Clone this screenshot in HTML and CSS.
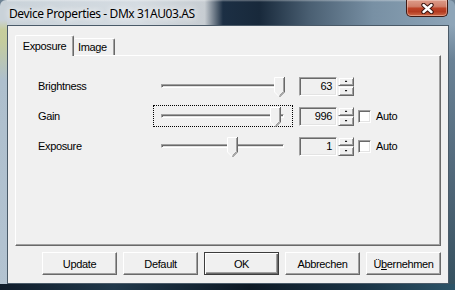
FILE: index.html
```html
<!DOCTYPE html>
<html>
<head>
  <title>Device Properties</title>
  <link rel="stylesheet" href="styles.css">
</head>
<body>
  <div class="window">
    <div class="titlebar">
      <span class="title">Device Properties - DMx 31AU03.AS</span>
      <div class="close">
        <svg width="13" height="11" viewBox="0 0 13 11">
          <path d="M2.5 2 L10.5 9 M10.5 2 L2.5 9" stroke="#3a1510" stroke-width="4.4" stroke-linecap="round"/>
          <path d="M2.5 2 L10.5 9 M10.5 2 L2.5 9" stroke="#fff" stroke-width="2.4" stroke-linecap="round"/>
        </svg>
      </div>
    </div>

    <div class="client">
      <div class="tabs">
        <div class="tab active">Exposure</div>
        <div class="tab">Image</div>
      </div>

      <div class="panel">
        <div class="row">
          <span class="name">Brightness</span>
          <div class="slider">
            <div class="track"></div>
            <svg class="thumb" style="left: 120px" width="11" height="21" viewBox="0 0 11 21">
              <path d="M0.5 15 V0.5 H10.5 V15 L5.5 20 Z" fill="#f0f0f0"/>
              <path d="M5 19.5 L0.5 15 V0.5 H10" fill="none" stroke="#fff"/>
              <path d="M10.5 0 V15 L5.5 20" fill="none" stroke="#696969"/>
              <path d="M9.5 1 V14.5 L5.5 18.5" fill="none" stroke="#a0a0a0"/>
            </svg>
          </div>
          <div class="edit">63</div>
          <div class="spin"><span class="up"></span><span class="down"></span></div>
        </div>

        <div class="row">
          <span class="name">Gain</span>
          <div class="slider focus">
            <div class="track"></div>
            <svg class="thumb" style="left: 116px" width="11" height="21" viewBox="0 0 11 21">
              <path d="M0.5 15 V0.5 H10.5 V15 L5.5 20 Z" fill="#f0f0f0"/>
              <path d="M5 19.5 L0.5 15 V0.5 H10" fill="none" stroke="#fff"/>
              <path d="M10.5 0 V15 L5.5 20" fill="none" stroke="#696969"/>
              <path d="M9.5 1 V14.5 L5.5 18.5" fill="none" stroke="#a0a0a0"/>
            </svg>
          </div>
          <div class="edit">996</div>
          <div class="spin"><span class="up"></span><span class="down"></span></div>
          <span class="check"></span>
          <span class="auto">Auto</span>
        </div>

        <div class="row">
          <span class="name">Exposure</span>
          <div class="slider">
            <div class="track"></div>
            <svg class="thumb" style="left: 73px" width="11" height="21" viewBox="0 0 11 21">
              <path d="M0.5 15 V0.5 H10.5 V15 L5.5 20 Z" fill="#f0f0f0"/>
              <path d="M5 19.5 L0.5 15 V0.5 H10" fill="none" stroke="#fff"/>
              <path d="M10.5 0 V15 L5.5 20" fill="none" stroke="#696969"/>
              <path d="M9.5 1 V14.5 L5.5 18.5" fill="none" stroke="#a0a0a0"/>
            </svg>
          </div>
          <div class="edit">1</div>
          <div class="spin"><span class="up"></span><span class="down"></span></div>
          <span class="check"></span>
          <span class="auto">Auto</span>
        </div>
      </div>

      <div class="buttons">
        <button class="btn">Update</button>
        <button class="btn">Default</button>
        <button class="btn default">OK</button>
        <button class="btn">Abbrechen</button>
        <button class="btn">Ü<u>b</u>ernehmen</button>
      </div>
    </div>
  </div>
</body>
</html>
```

FILE: styles.css
```css
* {
  box-sizing: border-box;
}

body {
  margin: 0;
  background: #6d8294;
  font-family: "Liberation Sans", Arial, sans-serif;
  font-size: 11px;
  letter-spacing: -0.35px;
  color: #000;
}

/* glass frame */
.window {
  width: 455px;
  height: 290px;
  padding: 0 6px 6px 7px;
  border-radius: 6px 6px 0 0;
  display: flex;
  flex-direction: column;
  background:
    linear-gradient(to right, #0f1c2a, #20384a 25%, #0c1824 55%, #1a3446 80%, #2d5468) left bottom / 100% 6px no-repeat,
    linear-gradient(to bottom, #c9d2d9 20px, #c6cd9c 30px, #c4cc9e 42px, #aebfcd 80px, #b3c3d1 100%) left top / 7px 100% no-repeat,
    linear-gradient(to bottom, #8ea5b8 25px, #6a8296 60px, #4b6273 70%, #34505e) right top / 6px 100% no-repeat,
    linear-gradient(to bottom, rgba(255, 255, 255, 0.35), transparent 2px) left top / 100% 3px no-repeat,
    linear-gradient(to right, #c9d2d9 0, #d5dce2 30%, #c7cdd2 45%, #1c2f44 49%, #18293b 57%, #4a5f72 68%, #7890a4 82%, #8ea5b8 100%);
}

.titlebar {
  height: 25px;
  display: flex;
  justify-content: space-between;
  align-items: flex-start;
  padding-left: 2px;
}

.title {
  font-family: "Noto Sans", sans-serif;
  font-size: 12px;
  letter-spacing: -0.4px;
  line-height: 16px;
  padding-top: 6px;
  text-shadow: 0 0 6px #fff, 0 0 10px rgba(255, 255, 255, 0.8);
}

.close {
  width: 42px;
  height: 17px;
  margin-right: 1px;
  border: 1px solid #3f1a14;
  border-top: none;
  border-radius: 0 0 5px 5px;
  background: linear-gradient(#dd9c8a, #d07f6a 40%, #bd4328 52%, #b33a20 72%, #cf6a48);
  box-shadow: inset 0 0 0 1px rgba(255, 230, 220, 0.4);
  display: flex;
  align-items: center;
  justify-content: center;
}

.client {
  flex: 1;
  background: #f0f0f0;
  border: 1px solid #4a5a68;
  padding: 9px 7px 8px 7px;
  display: flex;
  flex-direction: column;
}

/* tab control */
.tabs {
  display: flex;
  align-items: flex-end;
  height: 20px;
  position: relative;
  z-index: 1;
}

.tab {
  width: 41px;
  height: 17px;
  padding-left: 4px;
  line-height: 16px;
  border-top: 1px solid #fff;
  border-right: 1px solid #696969;
  box-shadow: inset -1px 0 0 #a0a0a0;
  border-radius: 2px 2px 0 0;
}

.tab.active {
  width: 59px;
  height: 21px;
  margin-bottom: -1px;
  padding-left: 0;
  line-height: 20px;
  text-align: center;
  border-left: 1px solid #fff;
  background: #f0f0f0;
}

.panel {
  height: 191px;
  border: 1px solid;
  border-color: #fff #696969 #696969 #fff;
  box-shadow: inset -1px -1px 0 #a0a0a0;
  padding: 19px 0 0 22px;
  display: flex;
  flex-direction: column;
  gap: 8px;
}

.row {
  display: flex;
  align-items: center;
  height: 22px;
}

.name {
  width: 115px;
}

.slider {
  position: relative;
  width: 140px;
  height: 22px;
  border: 1px dotted transparent;
  display: flex;
  align-items: center;
  padding-left: 7px;
  margin-right: 6px;
}

.slider.focus {
  border-color: #000;
}

.track {
  width: 123px;
  height: 4px;
  border: 1px solid;
  border-color: #a0a0a0 #fff #fff #a0a0a0;
  box-shadow: inset 1px 1px 0 #696969;
  background: #e3e3e3;
}

.thumb {
  position: absolute;
  top: 1px;
}

.edit {
  width: 38px;
  height: 19px;
  border: 1px solid;
  border-color: #a0a0a0 #fff #fff #a0a0a0;
  box-shadow: inset 1px 1px 0 #696969, inset -1px -1px 0 #e3e3e3;
  text-align: right;
  padding-right: 4px;
  line-height: 17px;
  margin-right: 1px;
}

.spin {
  width: 16px;
  height: 19px;
  display: flex;
  flex-direction: column;
}

.spin span {
  flex: 1;
  border: 1px solid;
  border-color: #f0f0f0 #696969 #696969 #f0f0f0;
  box-shadow: inset 1px 1px 0 #fff, inset -1px -1px 0 #a0a0a0;
  display: flex;
  align-items: center;
  justify-content: center;
}

.spin span::after {
  content: "";
  width: 3px;
  height: 2px;
  background: #000;
}

.spin .up::after {
  clip-path: polygon(50% 0, 100% 100%, 0 100%);
}

.spin .down::after {
  clip-path: polygon(0 0, 100% 0, 50% 100%);
}

.check {
  width: 13px;
  height: 13px;
  margin-left: 4px;
  border: 1px solid;
  border-color: #a0a0a0 #fff #fff #a0a0a0;
  box-shadow: inset 1px 1px 0 #696969, inset -1px -1px 0 #e3e3e3;
  background: #fff;
}

.auto {
  margin-left: 5px;
}

.buttons {
  display: flex;
  justify-content: flex-end;
  gap: 6px;
  margin-top: 6px;
}

.btn {
  width: 75px;
  height: 23px;
  padding: 0;
  border: 1px solid;
  border-color: #fff #696969 #696969 #fff;
  box-shadow: inset -1px -1px 0 #a0a0a0;
  background: #f0f0f0;
  font: inherit;
  letter-spacing: inherit;
  color: #000;
}

.btn.default {
  border-color: #3c3c3c;
  box-shadow: inset 1px 1px 0 #fff, inset -1px -1px 0 #696969, inset -2px -2px 0 #a0a0a0;
}
```
